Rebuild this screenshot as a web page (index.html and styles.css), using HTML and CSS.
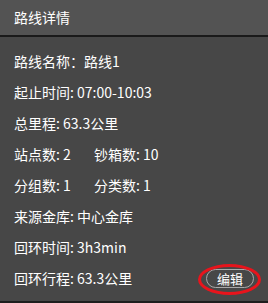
FILE: index.html
```html
<!DOCTYPE html>
<html lang="zh">
<head>
<meta charset="utf-8">
<link rel="stylesheet" href="styles.css">
</head>
<body>
<div class="panel">
  <div class="header">路线详情</div>
  <div class="content">
    <div class="row">路线名称：路线1</div>
    <div class="row">起止时间: 07:00-10:03</div>
    <div class="row">总里程: 63.3公里</div>
    <div class="row"><span class="col">站点数: 2</span><span>钞箱数: 10</span></div>
    <div class="row"><span class="col">分组数: 1</span><span>分类数: 1</span></div>
    <div class="row">来源金库: 中心金库</div>
    <div class="row">回环时间: 3h3min</div>
    <div class="row last"><span>回环行程: 63.3公里</span><span class="btn">编辑</span></div>
  </div>
</div>
</body>
</html>
```
FILE: styles.css
```css
html, body {
  margin: 0;
  padding: 0;
  background: #1e1e1e;
}
body {
  width: 268px;
  height: 303px;
  font-family: "Noto Sans CJK SC", "Noto Sans", sans-serif;
  color: #ffffff;
}
.panel {
  width: 268px;
  height: 301px;
  background: #474747;
  display: flex;
  flex-direction: column;
}
.header {
  height: 35px;
  line-height: 35px;
  background: #535353;
  border-bottom: 2px solid #1a1a1a;
  padding-left: 14px;
  font-size: 14px;
}
.content {
  padding: 9px 0 0 14px;
  display: flex;
  flex-direction: column;
}
.row {
  height: 31px;
  line-height: 31px;
  font-size: 14px;
  display: flex;
  align-items: center;
  white-space: nowrap;
}
.col {
  width: 80px;
}
.last {
  justify-content: space-between;
  padding-right: 14px;
}
.btn {
  position: relative;
  width: 46px;
  height: 17px;
  line-height: 17px;
  border: 1px solid #a8a8a8;
  border-radius: 10px;
  text-align: center;
  font-size: 13px;
  color: #ffffff;
}
.btn::after {
  content: "";
  position: absolute;
  left: -9px;
  top: -6px;
  right: -8px;
  bottom: -8px;
  border: 3px solid #e8141c;
  border-radius: 50%;
}
```
